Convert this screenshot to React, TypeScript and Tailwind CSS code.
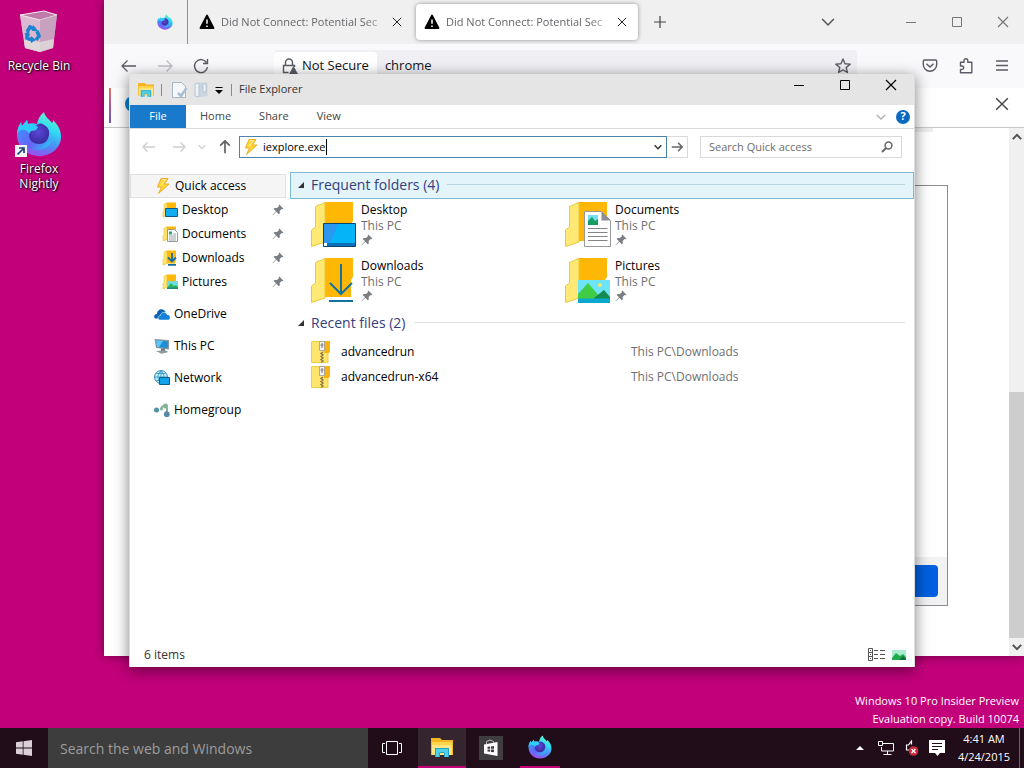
import type { ReactNode } from "react";

type IconProps = { className?: string };

/* ---------- Shared icons ---------- */

function FirefoxLogo({ id, className }: IconProps & { id: string }) {
  return (
    <svg viewBox="0 0 46 46" className={className} aria-hidden="true">
      <defs>
        <linearGradient id={`${id}-body`} x1="0.75" y1="0" x2="0.35" y2="1">
          <stop offset="0" stopColor="#6af5cd" />
          <stop offset="0.35" stopColor="#2fdcf2" />
          <stop offset="0.65" stopColor="#4b8df5" />
          <stop offset="1" stopColor="#a04af0" />
        </linearGradient>
        <linearGradient id={`${id}-flame`} x1="0" y1="0.2" x2="1" y2="0.6">
          <stop offset="0" stopColor="#3d8dfb" />
          <stop offset="0.5" stopColor="#6a62f6" />
          <stop offset="1" stopColor="#31b6f6" />
        </linearGradient>
        <radialGradient id={`${id}-globe`} cx="0.45" cy="0.4" r="0.6">
          <stop offset="0" stopColor="#5a49d8" />
          <stop offset="1" stopColor="#3a2a9e" />
        </radialGradient>
      </defs>
      <path
        d="M28 1c1 5 5 7 8 11 1-1 1-2 1-3 5 5 8 10 8 17 0 11-10 19-22 19S1 36 1 24c0-5 2-10 4-13l1 4 5-6 1 4c3-1 6-1 9 0 1-5 3-9 7-12z"
        fill={`url(#${id}-body)`}
      />
      <path
        d="M5 16l7-3c4-1 8 0 11 3l-5 3c-2 1-3 3-3 5 0 5 4 9 9 9 6 0 10-3 11-9 2 8-3 14-12 15-10 1-18-5-19-14-1-4-1-7 1-9z"
        fill={`url(#${id}-flame)`}
      />
      <path
        d="M20 14c3-2 6-2 8 0 4 2 6 6 5 10-1 6-5 9-10 9-6 0-10-4-10-9 0-2 1-4 3-5 3 0 6-2 4-5z"
        fill={`url(#${id}-globe)`}
      />
      <path d="M3 15l2-3 1 3 5-6 1 4c4-1 7 0 10 3-1 3-4 4-7 4l-2 3c-1-3-4-5-8-4-2 1-3 2-4 4 0-3 1-6 2-8z" fill="#2ecdfa" />
    </svg>
  );
}

function WarningIcon({ className }: IconProps) {
  return (
    <svg viewBox="0 0 16 16" className={className} aria-hidden="true">
      <path d="M8 1.6 14.4 14H1.6z" fill="#000" stroke="#000" strokeWidth="2" strokeLinejoin="round" />
      <path d="M8 5.5v4.3M8 11.4v1.6" stroke="#fff" strokeWidth="1.5" />
    </svg>
  );
}

function CrossIcon({ className }: IconProps) {
  return (
    <svg viewBox="0 0 12 12" className={className} aria-hidden="true">
      <path d="M1 1l10 10M11 1L1 11" stroke="currentColor" strokeWidth="1.2" fill="none" />
    </svg>
  );
}

function MinimizeIcon() {
  return (
    <svg viewBox="0 0 12 12" className="size-3" aria-hidden="true">
      <path d="M1 6.5h10" stroke="currentColor" />
    </svg>
  );
}

function MaximizeIcon() {
  return (
    <svg viewBox="0 0 12 12" className="size-3" aria-hidden="true">
      <path d="M1.5 1.5h9v9h-9z" stroke="currentColor" fill="none" />
    </svg>
  );
}

function ArrowIcon({ className, flip, weight = 1.3 }: IconProps & { flip?: boolean; weight?: number }) {
  return (
    <svg viewBox="0 0 16 16" className={className} aria-hidden="true">
      <path
        d={flip ? "M1 8h14M9.500 2.500L15 8l-5.500 5.500" : "M15 8H1M6.500 2.500L1 8l5.500 5.500"}
        stroke="currentColor"
        strokeWidth={weight}
        fill="none"
      />
    </svg>
  );
}

function ChevronDown({ className, weight = 1.3 }: IconProps & { weight?: number }) {
  return (
    <svg viewBox="0 0 12 12" className={className} aria-hidden="true">
      <path d="M1 3.500l5 5 5-5" stroke="currentColor" strokeWidth={weight} fill="none" />
    </svg>
  );
}

function BoltIcon({ className }: IconProps) {
  return (
    <svg viewBox="0 0 16 16" className={className} aria-hidden="true">
      <path d="M6 .5h7L9.500 6H14L3.500 15.500 6.500 9H2.500z" fill="#ffd735" stroke="#eda51c" strokeWidth=".9" />
      <path d="M7 1.500h3.500L6 7.500" fill="none" stroke="#fff3a0" />
    </svg>
  );
}

function PinIcon({ className }: IconProps) {
  return (
    <svg viewBox="0 0 12 12" className={className} aria-hidden="true">
      <path d="M7.300.5l4.200 4.200-1.300.6-.6-.2-1.900 2 .1 2.300-1 .8-2.500-2.500L.8 11.300l-.4-.4L4 7.300 1.700 4.900l.9-1 2.300.2 2-1.900-.2-.6z" fill="#7a7f85" />
    </svg>
  );
}

function ExplorerIcon({ className }: IconProps) {
  return (
    <svg viewBox="0 0 22 19" className={className} aria-hidden="true">
      <path d="M0 0h9l2 2h11v15H0z" fill="#f5b421" />
      <path d="M1 4h20v13H1z" fill="#ffe680" />
      <path d="M1 4h20v3H1z" fill="#ffd54a" />
      <path d="M4 19v-9h14v9h-4v-5H8v5z" fill="#4fd0e8" />
      <path d="M4.500 19v-8.500h13V19M8.500 19v-4.500h5V19" fill="none" stroke="#22a3c4" />
    </svg>
  );
}

/* ---------- Folder icons ---------- */

type FolderKind = "desktop" | "documents" | "downloads" | "pictures";

function FolderIcon({ kind, className }: IconProps & { kind: FolderKind }) {
  return (
    <svg viewBox="0 0 46 46" className={className} aria-hidden="true">
      <path d="M14 0H42V19l-2 3v17H14z" fill="#ffb706" />
      <path d="M4.500 4.500L14 .5V40L.5 44.500V28l4-3z" fill="#ffe873" stroke="#e8c93e" />
      {kind === "desktop" && (
        <g>
          <path d="M12.500 21.500h32v23h-32z" fill="#05b4f7" stroke="#0c4568" />
          <path d="M13 22h14L19 41h-6z" fill="#2b97ee" />
          <path d="M13 41h31v3H13z" fill="#0871b8" />
          <path d="M13 41h3v3h-3z" fill="#fff" />
        </g>
      )}
      {kind === "documents" && (
        <g>
          <path d="M19.500 9.500h17l9 9V44.500h-26z" fill="#fff" stroke="#999" />
          <path d="M36.500 9v9.500h9z" fill="#8d9095" />
          <path d="M23 13h10v10H23z" fill="#73e1f2" />
          <path d="M23 23v-4l4-4 3 4 3-2v6z" fill="#159c5e" />
          <path d="M23 26.500h19.500M23 30.500h19.500M23 34.500h19.500M23 38.500h19.500" stroke="#858585" />
        </g>
      )}
      {kind === "downloads" && (
        <g fill="none" stroke="#14729f" strokeWidth="2">
          <path d="M30 6v29M19 25l11 11L41 25M18 43h24" />
        </g>
      )}
      {kind === "pictures" && (
        <g>
          <path d="M13 22h32v23H13z" fill="#6ee5f7" />
          <path d="M13 36l10-11 12 14v4H13z" fill="#40cc45" />
          <path d="M29 40l10-8 6 7v4H29z" fill="#138b50" />
          <path d="M13 40.500h32V45H13z" fill="#0aa8cf" />
          <circle cx="35" cy="27" r="2" fill="#f6e56c" />
        </g>
      )}
    </svg>
  );
}

function SmallFolderIcon({ kind }: { kind: FolderKind }) {
  return (
    <svg viewBox="0 0 16 16" className="size-4" aria-hidden="true">
      <path d="M4.500 .5H14v9l-1 4H4.500z" fill="#ffb906" />
      <path d="M2 2.200L5 1v12.500L1 15V9.500l1-1z" fill="#ffe66e" stroke="#e3bd3a" strokeWidth=".6" />
      {kind === "desktop" && <path d="M3.500 6.500h12v8h-12z" fill="#12aef0" stroke="#0b5c88" />}
      {kind === "documents" && (
        <g>
          <path d="M5.500 3.500h7l3 3v9h-10z" fill="#fff" stroke="#999" />
          <path d="M7 5.500h3v3H7z" fill="#29a878" />
          <path d="M7 10h7M7 12h7M7 14h7M11 8h3" stroke="#7c8b95" strokeWidth=".8" />
        </g>
      )}
      {kind === "downloads" && (
        <path d="M10 3v8M6 7.500l4 4 4-4M6 14.800h8" fill="none" stroke="#156fa8" strokeWidth="1.8" />
      )}
      {kind === "pictures" && (
        <g>
          <path d="M5 7h11v8H5z" fill="#6fdcd8" />
          <path d="M5 14l4-5 3 3 2-1 2 2v1z" fill="#2db260" />
          <path d="M5 13.500h11V15H5z" fill="#178f7c" />
        </g>
      )}
    </svg>
  );
}

function OneDriveIcon() {
  return (
    <svg viewBox="0 0 16 16" className="size-4" aria-hidden="true">
      <path d="M1 12.500C-.8 10.500.5 8 3 8c0-5 6.500-6.500 8.500-2L8 7l-2 5.500z" fill="#0b62b3" />
      <path d="M5.500 14c-2.200-1-1.700-4.500 1-4.500 0-3.500 5.500-4.500 6.500-1 3.500 0 4.200 4.500 1.500 5.500z" fill="#1283d8" stroke="#fff" strokeWidth=".5" />
    </svg>
  );
}

function PcIcon() {
  return (
    <svg viewBox="0 0 16 16" className="size-4" aria-hidden="true">
      <path d="M.5 1l14.500 1v9.500L2 10z" fill="#8b969d" />
      <path d="M2 2.500l11.800.8v7L3 9z" fill="#1d8fd8" />
      <path d="M2 2.500l7 .5L5 9H3z" fill="#5fc4f2" />
      <path d="M7 10.500h4V13H7z" fill="#6d777d" />
      <path d="M2 13l9-.8 3.500 1.800-7 1.700z" fill="#8d989e" />
    </svg>
  );
}

function NetworkIcon() {
  return (
    <svg viewBox="0 0 16 16" className="size-4" aria-hidden="true">
      <circle cx="7" cy="7" r="6.400" fill="#c9eefa" stroke="#2089b8" />
      <path d="M1 7h12M7 1v12M2.500 3.500h9M2.500 10.500h9M7 1C3 4 3 10 7 13M7 1c4 3 4 9 0 12" fill="none" stroke="#2c91bd" strokeWidth=".8" />
      <path d="M5.500 7.500h10v7h-10z" fill="#12a2e8" stroke="#0a5d8f" />
    </svg>
  );
}

function HomegroupIcon() {
  return (
    <svg viewBox="0 0 16 16" className="size-4" aria-hidden="true">
      <path d="M7 6q3-4 6 0v6" stroke="#85b29c" strokeWidth="2" fill="none" />
      <circle cx="2.500" cy="8" r="2.500" fill="#4a94a5" />
      <circle cx="7.500" cy="7" r="1.600" fill="#85b29c" />
      <circle cx="11.500" cy="4" r="2.500" fill="#85b29c" />
      <circle cx="12.800" cy="12.200" r="2.900" fill="#5b88a8" />
    </svg>
  );
}

function ZipIcon() {
  return (
    <svg viewBox="0 0 20 22" className="h-[22px] w-5" aria-hidden="true">
      <path d="M.5.500H17V21.500H.500z" fill="#ffe56b" stroke="#edce47" />
      <path d="M13 0h6v10l-1 2h-5z" fill="#f9b210" />
      <path d="M8.500.500h5v9h-5z" fill="#f1f2f3" stroke="#9a9a9a" strokeWidth=".8" />
      <path d="M11 2v5M9.500 4h3" stroke="#777" />
      <path d="M12 11l-2 1.500L12 14l-2 1.500L12 17l-2 1.500L12 20l-2 1.500" fill="none" stroke="#837246" strokeWidth="1.300" />
    </svg>
  );
}

function RecycleBinIcon() {
  return (
    <svg viewBox="0 0 40 44" className="h-11 w-10" aria-hidden="true">
      <path d="M1 5L25 1l13 4-4 33-13 4L6 38z" fill="#d9b3ce" fillOpacity=".85" />
      <path d="M1 5l20 5v32L6 38z" fill="#dcc0d4" fillOpacity=".85" />
      <path d="M1 5L25 1l13 4-17 5z" fill="#c07aa8" stroke="#f4eaf2" />
      <path d="M21 10l17-5-4 33-13 4z" fill="#c4a4bd" fillOpacity=".8" />
      <path d="M5 30l16 2 14-3-1 9-13 4-15-4z" fill="#e0e0dc" fillOpacity=".75" />
      <g fill="none" stroke="#1d84cf" strokeWidth="3.600">
        <path d="M8 22l3-5 5 2" />
        <path d="M18 21l2 5-3 4" />
        <path d="M13 30l-5-2v-4" />
      </g>
      <path d="M14 15l5 6-6 0zM12 26v7l5-3zM5 24l5-3 1 5z" fill="#1d84cf" />
    </svg>
  );
}

/* ---------- Desktop ---------- */

function DesktopShortcut({ label, children }: { label: string; children: ReactNode }) {
  return (
    <button className="flex w-[78px] flex-col items-center gap-1 text-center text-[12px] leading-[15px] text-white [text-shadow:1px_1px_2px_#000,0_0_2px_#000]">
      {children}
      <span>{label}</span>
    </button>
  );
}

/* ---------- Firefox window ---------- */

function FirefoxTab({ active }: { active?: boolean }) {
  return (
    <div
      className={
        active
          ? "flex h-9 w-[222px] items-center rounded bg-white px-2 shadow-[0_0_4px_rgba(0,0,0,0.4)]"
          : "flex h-9 w-[222px] items-center px-2"
      }
    >
      <WarningIcon className="size-4 shrink-0" />
      <button className="ml-1.5 flex-1 text-left text-[11px] whitespace-nowrap text-[#66666b] [mask-image:linear-gradient(to_right,#000_85%,#0003)]">
        Did Not Connect: Potential Sec
      </button>
      <button aria-label="Close tab" className="flex size-4 items-center justify-center text-[#222]">
        <CrossIcon className="size-[10px]" />
      </button>
    </div>
  );
}

function CaptionButtons() {
  return (
    <>
      <button aria-label="Minimize" className="flex h-full w-[46px] items-center justify-center">
        <MinimizeIcon />
      </button>
      <button aria-label="Maximize" className="flex h-full w-[46px] items-center justify-center">
        <MaximizeIcon />
      </button>
      <button aria-label="Close" className="flex h-full w-[46px] items-center justify-center">
        <CrossIcon className="size-3" />
      </button>
    </>
  );
}

function FirefoxWindow() {
  return (
    <section
      aria-label="Firefox Nightly"
      className="absolute top-0 right-0 bottom-[72px] left-[104px] flex flex-col bg-white shadow-[0_0_10px_rgba(0,0,0,0.45)]"
    >
      <div className="flex h-11 shrink-0 items-center bg-[#f0f0f0]">
        <div className="flex h-full w-[84px] items-center justify-end border-r border-[#909090] pr-3.5">
          <FirefoxLogo id="pinned" className="size-4" />
        </div>
        <div className="ml-[3px] flex gap-[3px]">
          <FirefoxTab />
          <FirefoxTab active />
        </div>
        <button aria-label="New tab" className="ml-4 text-[#444]">
          <svg viewBox="0 0 12 12" className="size-3">
            <path d="M6 0v12M0 6h12" stroke="currentColor" strokeWidth="1.2" />
          </svg>
        </button>
        <button aria-label="List all tabs" className="mr-[53px] ml-auto text-[#555]">
          <ChevronDown className="size-[14px]" />
        </button>
        <div className="-mr-0.5 flex h-full text-[#777]">
          <CaptionButtons />
        </div>
      </div>

      <div className="flex h-11 shrink-0 items-center bg-[#f9f9fb] pr-3.5 pl-4 text-[#5b5b66]">
        <button aria-label="Back" className="ml-px">
          <ArrowIcon className="size-4" />
        </button>
        <button aria-label="Forward" className="ml-5 text-[#bdbdc3]">
          <ArrowIcon className="size-4" flip />
        </button>
        <button aria-label="Reload" className="ml-5">
          <svg viewBox="0 0 16 16" className="size-4">
            <path d="M13.500 4.500A6.500 6.500 0 1 0 14.500 9M14.500 1v4.500H10" fill="none" stroke="currentColor" strokeWidth="1.4" />
          </svg>
        </button>
        <div className="mr-[65px] ml-[65px] flex h-8 flex-1 items-center rounded bg-[#f0f0f4] pr-1.5 text-[13px] text-[#15141a]">
          <button className="flex h-7 items-center gap-1 rounded bg-white px-2">
            <svg viewBox="0 0 16 16" className="size-4 text-[#5b5b66]">
              <path d="M3.500 7V4.500a3.500 3.500 0 0 1 7 0V7M6.500 14.500H1.500v-7h11V9" fill="none" stroke="currentColor" strokeWidth="1.400" />
              <path d="M11.500 8l4.500 8H7z" fill="currentColor" />
            </svg>
            <span>Not Secure</span>
          </button>
          <input aria-label="Address" defaultValue="chrome" className="ml-2 min-w-0 flex-1 bg-transparent outline-none" />
          <button aria-label="Bookmark this page" className="text-[#5b5b66]">
            <svg viewBox="0 0 16 16" className="size-4">
              <path d="M8 1l2 4.700 5.200.4-4 3.400 1.200 5L8 11.900l-4.400 2.600 1.200-5-4-3.400L6 5.700z" fill="none" stroke="currentColor" strokeWidth="1.400" strokeLinejoin="round" />
            </svg>
          </button>
        </div>
        <div className="flex items-center gap-5">
          <button aria-label="Save to Pocket">
            <svg viewBox="0 0 16 16" className="size-4">
              <path d="M2.500 2h11q1.200 0 1.200 1.200V6.500a6.700 6.700 0 0 1-13.400 0V3.200q0-1.200 1.200-1.200z" fill="none" stroke="currentColor" strokeWidth="1.400" />
              <path d="M4.500 5.800L8 9l3.500-3.200" fill="none" stroke="currentColor" strokeWidth="1.500" />
            </svg>
          </button>
          <button aria-label="Extensions">
            <svg viewBox="0 0 16 16" className="size-4">
              <path d="M2.500 14.800v-3.400H4a1.700 1.700 0 0 0 0-3.400H2.500V4.300H6V2.600a1.900 1.900 0 0 1 3.800 0v1.700H13.800v10.500z" fill="none" stroke="currentColor" strokeWidth="1.400" strokeLinejoin="round" />
            </svg>
          </button>
          <button aria-label="Menu">
            <svg viewBox="0 0 16 16" className="size-4">
              <path d="M2 3h12M2 7.500h12M2 12h12" stroke="currentColor" strokeWidth="1.300" />
            </svg>
          </button>
        </div>
      </div>

      <div className="flex h-10 shrink-0 items-start border-b border-[#c9c9cd] pr-[15px] pl-[5px]">
        <div className="h-[35px] w-0.5 bg-linear-to-b from-[#d9765e] via-[#b15a9a] to-[#7050b8]" />
        <div className="mt-2 ml-3.5 size-4 rounded-full bg-[#0a84d6]" />
        <button aria-label="Dismiss notification" className="mt-[9px] ml-auto text-[#444]">
          <CrossIcon className="size-[14px]" />
        </button>
      </div>

      <div className="flex min-h-0 flex-1">
        <div className="flex min-w-0 flex-1 flex-col pb-[50px]">
          <div className="mr-[76px] ml-[62px] h-[4px] bg-[#ededf0]" />
          <div className="mx-[61px] mt-[53px] flex flex-1 flex-col border border-[#8c8c90]">
            <div className="mt-auto flex justify-end bg-[#f2f2f4] px-[9px] py-2">
              <button aria-label="Accept the risk" className="h-8 w-52 rounded bg-[#0060df]" />
            </div>
          </div>
        </div>
        <div className="flex w-[15px] flex-col items-center bg-[#f0f0f0] text-[#505050]">
          <div className="flex h-[18px] items-center">
            <ChevronDown className="size-[10px] rotate-180" weight={2.4} />
          </div>
          <div className="flex-1" />
          <div className="h-[246px] w-full bg-[#cdcdcd]" />
          <div className="flex h-[18px] items-center">
            <ChevronDown className="size-[10px]" weight={2.4} />
          </div>
        </div>
      </div>
    </section>
  );
}

/* ---------- File Explorer window ---------- */

const quickLinks: { kind: FolderKind; name: string }[] = [
  { kind: "desktop", name: "Desktop" },
  { kind: "documents", name: "Documents" },
  { kind: "downloads", name: "Downloads" },
  { kind: "pictures", name: "Pictures" },
];

const places: { name: string; icon: ReactNode }[] = [
  { name: "OneDrive", icon: <OneDriveIcon /> },
  { name: "This PC", icon: <PcIcon /> },
  { name: "Network", icon: <NetworkIcon /> },
  { name: "Homegroup", icon: <HomegroupIcon /> },
];

const recentFiles = ["advancedrun", "advancedrun-x64"];

function GroupHeader({ title, selected }: { title: string; selected?: boolean }) {
  return (
    <button
      className={
        selected
          ? "flex h-[27px] w-full items-center border border-[#7fb9d3] bg-[#e3f4fb] pr-2 pb-0.5 pl-1.5"
          : "flex h-[27px] w-full items-center border border-transparent pr-2 pb-1.5 pl-1.5"
      }
    >
      <svg viewBox="0 0 8 8" className="size-2" aria-hidden="true">
        <path d="M7 1v6H1z" fill="#333" />
      </svg>
      <span className="ml-1.5 text-[14px] leading-5 whitespace-nowrap text-[#35407c]">{title}</span>
      <span className={selected ? "ml-2 h-px flex-1 bg-[#b9d5e0]" : "ml-2 h-px flex-1 bg-[#dcdfe3]"} />
    </button>
  );
}

function Sidebar() {
  return (
    <nav className="mt-0.5 flex w-[156px] shrink-0 flex-col gap-2">
      <div>
        <button className="flex h-6 w-full items-center gap-1 border border-[#e0e0e0] bg-[#f5f5f5] pl-6">
          <BoltIcon className="size-4" />
          Quick access
        </button>
        {quickLinks.map((link) => (
          <button key={link.kind} className="flex h-6 w-full items-center gap-1 pr-0.5 pl-8">
            <SmallFolderIcon kind={link.kind} />
            {link.name}
            <PinIcon className="ml-auto size-3" />
          </button>
        ))}
      </div>
      {places.map((place) => (
        <button key={place.name} className="flex h-6 w-full items-center gap-1 pl-6">
          {place.icon}
          {place.name}
        </button>
      ))}
    </nav>
  );
}

function ExplorerWindow() {
  return (
    <section
      aria-label="File Explorer"
      className="absolute top-[74px] right-[109px] bottom-[61px] left-[129px] flex flex-col border-x border-[#dcdcdc] bg-white text-[12px] text-black shadow-[0_3px_14px_rgba(0,0,0,0.5)]"
    >
      <header className="flex h-[31px] shrink-0 items-center bg-[#e5e5e5] pl-2">
        <ExplorerIcon className="h-[14px] w-4" />
        <span className="ml-[7px] h-3 w-px bg-[#8a8a8a]" />
        <button aria-label="Properties" className="ml-2.5">
          <svg viewBox="0 0 16 16" className="size-4">
            <path d="M.500.500h9l4 4v11H.5z" fill="#f4f7fa" stroke="#a9b6c4" />
            <path d="M6 11l3 3L14.500 6" fill="none" stroke="#a9bdd4" strokeWidth="2.500" />
          </svg>
        </button>
        <button aria-label="New folder" className="ml-1.5">
          <svg viewBox="0 0 14 16" className="h-4 w-[14px]">
            <path d="M5 .5h8.500v13.500l-8.500 1z" fill="#c9d5df" />
            <path d="M1 2l4-1v14l-4-1zM9 2h3v8H9z" fill="#edf2f6" stroke="#b8c6d2" />
          </svg>
        </button>
        <button aria-label="Customize toolbar" className="ml-[7px]">
          <svg viewBox="0 0 8 8" className="size-2">
            <path d="M.5 1.500h7" stroke="#000" />
            <path d="M0 4h8L4 8z" fill="#000" />
          </svg>
        </button>
        <span className="ml-2 h-3 w-px bg-[#8a8a8a]" />
        <h1 className="ml-[7px] text-[11px] text-[#333]">File Explorer</h1>
        <div className="ml-auto flex h-[22px] self-start">
          <CaptionButtons />
        </div>
      </header>

      <div className="flex h-6 shrink-0 items-center border-b border-[#dadbdc] text-[11px] text-[#444]">
        <button className="h-full w-14 bg-[#1979ca] text-white">File</button>
        <button className="h-full px-3.5">Home</button>
        <button className="h-full px-3.5">Share</button>
        <button className="h-full px-3.5">View</button>
        <button aria-label="Expand the ribbon" className="ml-auto text-[#b0b0b0]">
          <ChevronDown className="size-[10px]" weight={1.6} />
        </button>
        <button
          aria-label="Help"
          className="mr-1 ml-2.5 flex size-[14px] items-center justify-center rounded-full bg-[#0c69c0] text-[11px] font-bold text-white"
        >
          ?
        </button>
      </div>

      <div className="mt-[7px] flex h-[22px] shrink-0 items-center px-3 text-[11px]">
        <button aria-label="Back" className="text-[#cfcfcf]">
          <ArrowIcon className="size-[14px]" weight={1.6} />
        </button>
        <button aria-label="Forward" className="ml-4 text-[#cfcfcf]">
          <ArrowIcon className="size-[14px]" weight={1.6} flip />
        </button>
        <button aria-label="Recent locations" className="ml-3 text-[#cfcfcf]">
          <ChevronDown className="size-2" weight={2} />
        </button>
        <button aria-label="Up" className="ml-3 text-[#666]">
          <ArrowIcon className="size-[14px] rotate-90" weight={2} />
        </button>
        <div className="ml-[7px] flex h-full flex-1 items-center border border-[#4a83ad] bg-white px-1">
          <BoltIcon className="-ml-px size-4" />
          <input
            aria-label="Location"
            defaultValue="iexplore.exe"
            className="ml-1 min-w-0 [field-sizing:content] outline-none"
          />
          <span className="h-4 w-px bg-black" />
          <button aria-label="Previous locations" className="ml-auto text-[#333]">
            <ChevronDown className="size-2" weight={2.2} />
          </button>
        </div>
        <button
          aria-label="Go"
          className="flex h-full w-[21px] items-center justify-center border border-l-0 border-[#d9d9d9] text-[#666]"
        >
          <ArrowIcon className="size-3" weight={2} flip />
        </button>
        <div className="ml-3 flex h-full w-[202px] items-center border border-[#d9d9d9] px-2">
          <input
            type="search"
            aria-label="Search Quick access"
            placeholder="Search Quick access"
            className="min-w-0 flex-1 outline-none placeholder:text-[#6d6d6d]"
          />
          <svg viewBox="0 0 12 12" className="size-3" aria-hidden="true">
            <circle cx="7.500" cy="4.500" r="3.400" fill="none" stroke="#666" strokeWidth="1.500" />
            <path d="M5 7L1 11" stroke="#666" strokeWidth="2" />
          </svg>
        </div>
      </div>

      <div className="mt-3.5 flex min-h-0 flex-1">
        <Sidebar />
        <main className="ml-1 min-w-0 flex-1">
          <GroupHeader title="Frequent folders (4)" selected />
          <div className="flex flex-wrap pt-px pl-[21px]">
            {quickLinks.map((link) => (
              <button key={link.kind} className="flex h-14 w-[254px] items-start gap-1 text-left">
                <FolderIcon kind={link.kind} className="mt-0.5 size-[46px]" />
                <span className="mt-0.5 flex flex-col leading-4">
                  <span>{link.name}</span>
                  <span className="text-[#707070]">This PC</span>
                  <PinIcon className="size-3" />
                </span>
              </button>
            ))}
          </div>
          <GroupHeader title="Recent files (2)" />
          <table className="ml-[21px] w-[calc(100%-29px)] table-fixed">
            <tbody>
              {recentFiles.map((file) => (
                <tr key={file} className="h-[25px]">
                  <td className="w-[320px] p-0">
                    <span className="flex items-center gap-2.5">
                      <ZipIcon />
                      {file}
                    </span>
                  </td>
                  <td className="p-0 text-[#707070]">This PC\Downloads</td>
                </tr>
              ))}
            </tbody>
          </table>
        </main>
      </div>

      <footer className="flex h-6 shrink-0 items-center pr-2 pl-3.5 text-[#333]">
        <span>6 items</span>
        <button aria-label="Details view" className="ml-auto">
          <svg viewBox="0 0 17 14" className="h-[14px] w-[17px]">
            <path d="M.5.5h4v12h-4zM.5 4.500h4M.5 8.500h4" fill="none" stroke="#555" />
            <path d="M6 2.500h4M12 2.500h5M6 6.500h4M12 6.500h5M6 10.500h4M12 10.500h5" stroke="#555" />
            <path d="M2 2.500h1M2 6.500h1M2 10.500h1" stroke="#555" />
          </svg>
        </button>
        <button aria-label="Large icons view" className="ml-[7px]">
          <svg viewBox="0 0 14 12" className="h-3 w-[14px]">
            <path d="M0 1h14v10H0z" fill="#a9ecd0" />
            <path d="M0 9l4-5 4 3 3-2 3 3v3H0z" fill="#22ab4c" />
            <path d="M7 11l4-4 3 3v1z" fill="#0e7540" />
          </svg>
        </button>
      </footer>
    </section>
  );
}

/* ---------- Taskbar ---------- */

function Taskbar() {
  return (
    <footer className="flex h-10 shrink-0 items-center bg-[#210c19] text-white">
      <button aria-label="Start" className="flex h-full w-12 items-center justify-center">
        <svg viewBox="0 0 16 16" className="size-4">
          <path d="M0 2.200L6.700 1.300V7.600H0zM7.500 1.200L16 0v7.600H7.500zM0 8.400h6.700v6.300L0 13.800zM7.500 8.400H16V16l-8.500-1.200z" fill="#dccfd8" />
        </svg>
      </button>
      <input
        type="search"
        aria-label="Search the web and Windows"
        placeholder="Search the web and Windows"
        className="h-full w-80 bg-[#3d3d3d] px-3 text-[14px] outline-none placeholder:text-[#9c9c9c]"
      />
      <button aria-label="Task view" className="flex h-full w-12 items-center justify-center">
        <svg viewBox="0 0 20 14" className="h-[14px] w-5">
          <path d="M4.500.500h11v13h-11zM3 2.500H.5v9H3M17 2.500h2.500v9H17" fill="none" stroke="#fff" />
        </svg>
      </button>
      <button
        aria-label="File Explorer"
        className="ml-0.5 flex h-full w-12 items-center justify-center border-b-2 border-[#c40078] bg-[#35252f]"
      >
        <ExplorerIcon className="h-[19px] w-[22px]" />
      </button>
      <button aria-label="Store" className="flex h-full w-[50px] items-center justify-center">
        <svg viewBox="0 0 24 24" className="size-6">
          <path d="M0 0h24v24H0z" fill="#403d40" />
          <path d="M5 8.500L18.500 6v14L5 17.500z" fill="#fff" />
          <path d="M7.500 8V5.500q3.500-3 7 0V7" fill="none" stroke="#bbb" />
          <path d="M8.500 10.800l2.700-.3v2.300H8.500zM12 10.400l3-.4v2.800h-3zM8.500 13.500h2.700v2.300l-2.700-.3zM12 13.500h3v2.800l-3-.4z" fill="#403d40" />
        </svg>
      </button>
      <button
        aria-label="Firefox Nightly"
        className="ml-1 flex h-full w-10 items-center justify-center border-b-2 border-[#c40078]"
      >
        <FirefoxLogo id="taskbar" className="size-6" />
      </button>

      <div className="ml-auto flex h-full items-center">
        <button aria-label="Show hidden icons">
          <svg viewBox="0 0 8 8" className="size-2">
            <path d="M0 6l4-4 4 4z" fill="#fff" />
          </svg>
        </button>
        <button aria-label="Network" className="ml-[14px]">
          <svg viewBox="0 0 16 14" className="h-[14px] w-4">
            <path d="M4.500 2.500h11v7.500H3.500V6M.5.500h4v4h-4zM9.500 10v3M5.500 13.500h8" fill="none" stroke="#fff" />
          </svg>
        </button>
        <button aria-label="Volume muted" className="ml-[11px]">
          <svg viewBox="0 0 14 16" className="h-4 w-[14px]">
            <path d="M6.500 4.500V1L3.500 5H1.500v5H4" fill="none" stroke="#fff" strokeWidth="1.200" />
            <circle cx="8.500" cy="11" r="4.800" fill="#c92b3c" />
            <path d="M6.500 9l4 4M10.500 9l-4 4" stroke="#fff" strokeWidth="1.300" />
          </svg>
        </button>
        <button aria-label="Action center" className="ml-2.5">
          <svg viewBox="0 0 16 16" className="size-4">
            <path d="M0 0h16v13h-5l-2.500 3L6 13H0z" fill="#fff" />
            <path d="M3 3.500h10M3 6.500h10M3 9.500h6" stroke="#210c19" />
          </svg>
        </button>
        <time className="ml-3 flex h-full w-[54px] flex-col items-center justify-center text-[11px] leading-[18px] whitespace-nowrap">
          <span>4:41 AM</span>
          <span>4/24/2015</span>
        </time>
        <button aria-label="Show desktop" className="ml-2 h-full w-[5px] border-l border-[#705f69]" />
      </div>
    </footer>
  );
}

export default function App() {
  return (
    <div className="flex h-screen flex-col overflow-hidden bg-[#c2007a] font-['Open_Sans','Noto_Sans',sans-serif]">
      <div className="relative flex min-h-0 flex-1 flex-col justify-between">
        <div className="flex flex-col gap-[38px] pt-2.5">
          <DesktopShortcut label="Recycle Bin">
            <RecycleBinIcon />
          </DesktopShortcut>
          <DesktopShortcut label="Firefox Nightly">
            <span className="relative">
              <FirefoxLogo id="desktop" className="size-[46px]" />
              <svg viewBox="0 0 12 12" className="absolute bottom-0 -left-px size-3" aria-hidden="true">
                <path d="M0 0h12v12H0z" fill="#f4f4f6" />
                <path d="M2.500 9.500L8 4M4 3h5v5" fill="none" stroke="#183f78" strokeWidth="1.700" />
              </svg>
            </span>
          </DesktopShortcut>
        </div>
        <p className="self-end pr-[5px] text-right text-[11px] leading-[18px] text-white">
          Windows 10 Pro Insider Preview
          <br />
          Evaluation copy. Build 10074
        </p>
        <FirefoxWindow />
        <ExplorerWindow />
      </div>
      <Taskbar />
    </div>
  );
}
